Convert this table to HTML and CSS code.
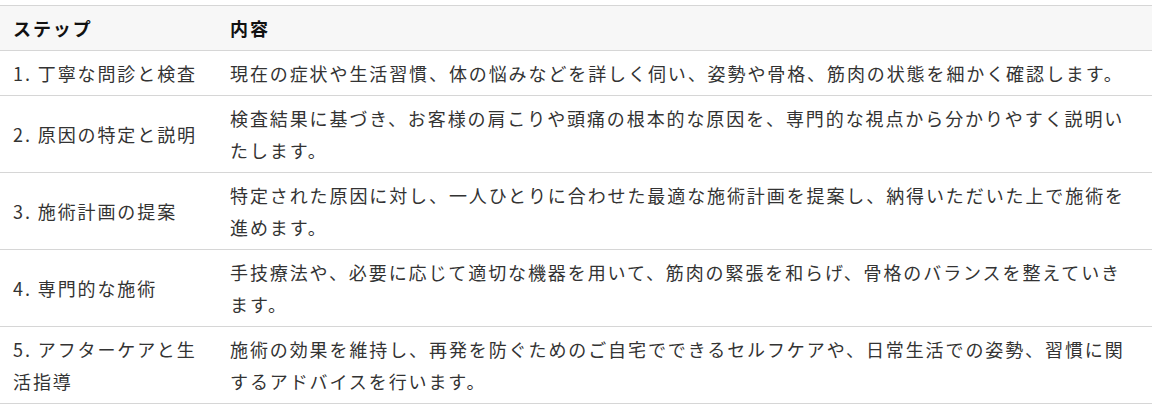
FILE: index.html
```html
<!DOCTYPE html>
<html lang="ja">
<head>
<meta charset="utf-8">
<title>施術の流れ</title>
<link rel="stylesheet" href="styles.css">
</head>
<body>
<div class="wrap">
<table class="steps">
<colgroup><col class="col-step"><col class="col-desc"></colgroup>
<thead>
<tr><th>ステップ</th><th>内容</th></tr>
</thead>
<tbody>
<tr><td>1. 丁寧な問診と検査</td><td>現在の症状や生活習慣、体の悩みなどを詳しく伺い、姿勢や骨格、筋肉の状態を細かく確認します。</td></tr>
<tr><td>2. 原因の特定と説明</td><td>検査結果に基づき、お客様の肩こりや頭痛の根本的な原因を、専門的な視点から分かりやすく説明いたします。</td></tr>
<tr><td>3. 施術計画の提案</td><td>特定された原因に対し、一人ひとりに合わせた最適な施術計画を提案し、納得いただいた上で施術を進めます。</td></tr>
<tr><td>4. 専門的な施術</td><td>手技療法や、必要に応じて適切な機器を用いて、筋肉の緊張を和らげ、骨格のバランスを整えていきます。</td></tr>
<tr><td>5. アフターケアと生活指導</td><td>施術の効果を維持し、再発を防ぐためのご自宅でできるセルフケアや、日常生活での姿勢、習慣に関するアドバイスを行います。</td></tr>
</tbody>
</table>
</div>
</body>
</html>
```

FILE: styles.css
```css
html, body {
  margin: 0;
  padding: 0;
  background: #ffffff;
}
.wrap {
  padding-top: 5px;
  width: 1152px;
}
.steps {
  width: 1152px;
  border-collapse: collapse;
  table-layout: fixed;
  font-family: "Noto Sans CJK JP", "Noto Sans", sans-serif;
  font-size: 18px;
  line-height: 32px;
  letter-spacing: 1.9px;
  color: #333333;
}
.col-step {
  width: 217px;
}
.steps th,
.steps td {
  padding: 6px 13px;
  text-align: left;
  vertical-align: middle;
  border-top: 1px solid #d6d6d6;
  border-bottom: 1px solid #d6d6d6;
}
.steps th {
  background: #f7f7f7;
  font-weight: 700;
  color: #111111;
}
```
